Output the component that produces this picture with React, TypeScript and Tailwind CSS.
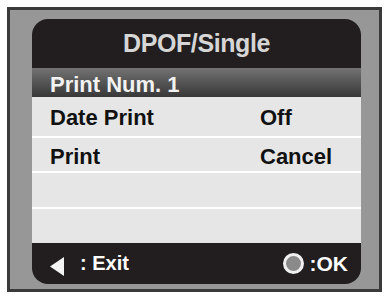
export default function App() {
  const rows = [
    { label: "Date Print", value: "Off", h: "h-[39px]" },
    { label: "Print", value: "Cancel", h: "h-[33px]" },
    { label: "", value: "", h: "h-[34px]" },
    { label: "", value: "", h: "h-[34px]" },
  ];

  return (
    <div
      className="w-[387px] h-[296px] bg-white pt-[7px] pl-[7px]"
      style={{ fontFamily: '"Liberation Sans", Arial, sans-serif' }}
    >
      <div className="w-[375px] h-[285px] border-[3px] border-[#3a3a3a] bg-[#979797] pl-[22px] pt-[9px]">
        <div className="w-[329px] h-[265px] rounded-[16px] bg-[#221e1f] overflow-hidden flex flex-col">
          {/* title */}
          <div className="h-[49px] flex items-center justify-center pt-[1px] text-[25px] font-bold text-[#d6d6d6] tracking-[-0.4px]">
            DPOF/Single
          </div>

          {/* selected row */}
          <div className="h-[29px] flex items-center pl-[18px] pt-[3px] bg-gradient-to-b from-[#737373] to-[#383838] text-[22px] font-bold text-[#f2f2f2]">
            Print Num. 1
          </div>

          {/* option rows */}
          <div className="flex flex-col bg-white">
            {rows.map((r, i) => (
              <div
                key={i}
                className={`${r.h} ${i > 0 ? "mt-[2px]" : ""} bg-[#e6e6e6] grid grid-cols-[210px_1fr] items-center pl-[18px] pt-[2px] text-[22px] font-bold text-[#111111]`}
              >
                <span>{r.label}</span>
                <span>{r.value}</span>
              </div>
            ))}
          </div>

          {/* footer */}
          <div className="h-[41px] flex items-center justify-between pl-[18px] pr-[13px] text-white text-[20px] font-bold">
            <div className="flex items-center">
              <svg width="15" height="19" viewBox="0 0 15 19" className="mt-[6px]">
                <polygon points="14,0 14,19 0,9.5" fill="#f4f4f4" />
              </svg>
              <span className="ml-[15px] mb-[2px]">: Exit</span>
            </div>
            <div className="flex items-center">
              <div className="w-[21px] h-[21px] rounded-full border-[3px] border-[#f0f0f0] bg-[#8a8a8a]" />
              <span className="ml-[6px] text-[21px]">:OK</span>
            </div>
          </div>
        </div>
      </div>
    </div>
  );
}
